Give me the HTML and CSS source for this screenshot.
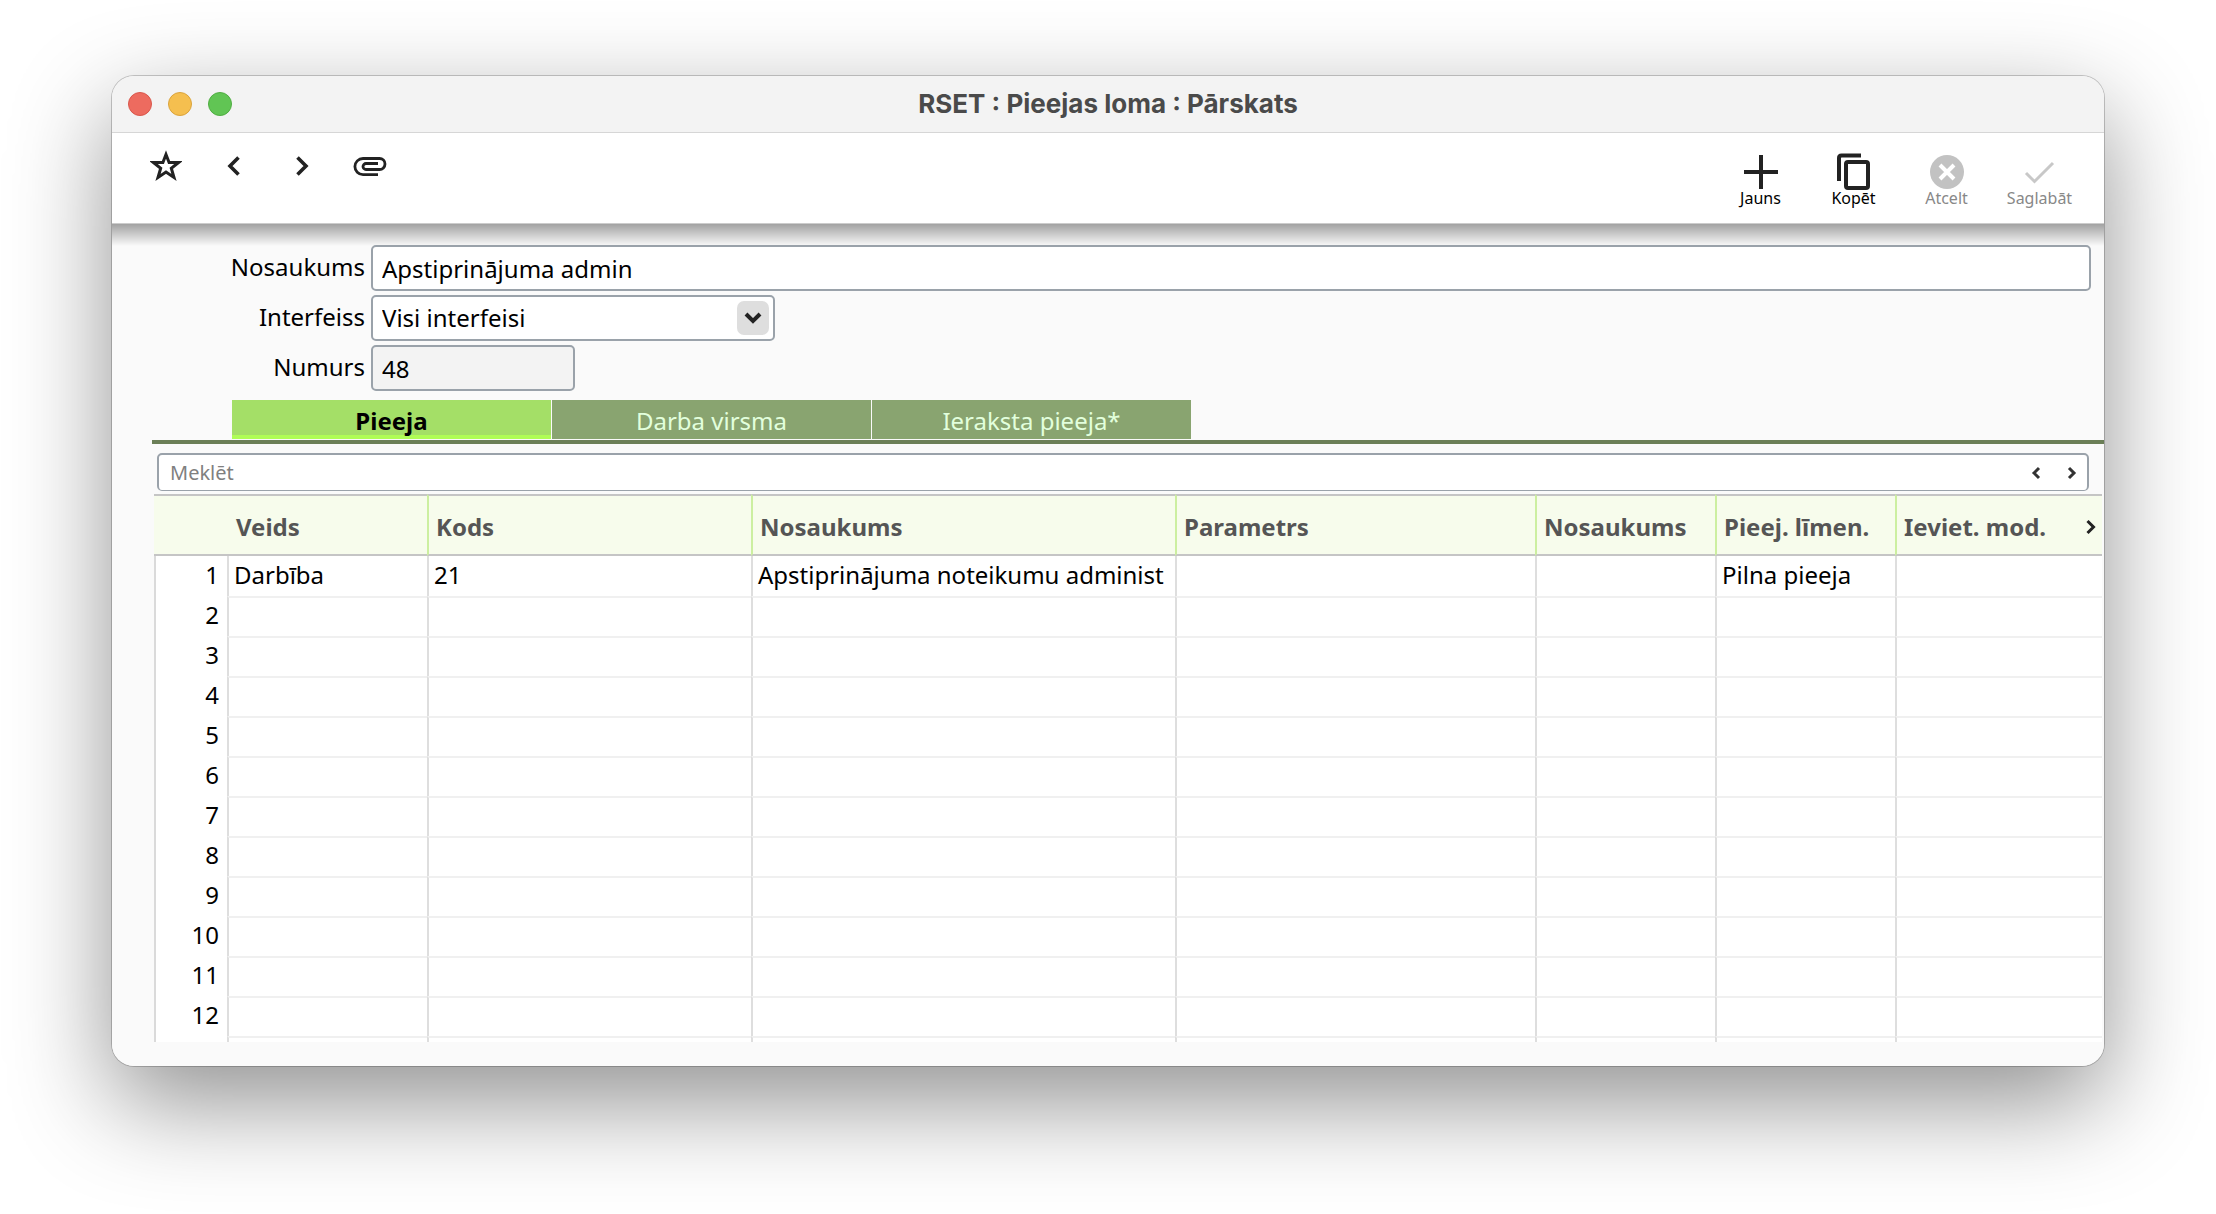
FILE: index.html
```html
<!DOCTYPE html>
<html lang="lv">
  <head>
    <meta charset="utf-8">
    <title>RSET : Pieejas loma : Pārskats</title>
    <link rel="stylesheet" href="styles.css">
  </head>
  <body>

    <div class="window">
      <header class="titlebar">
        <div class="lights">
          <button class="light close" aria-label="Aizvērt"></button>
          <button class="light minimize" aria-label="Minimizēt"></button>
          <button class="light maximize" aria-label="Palielināt"></button>
        </div>
        <h1>RSET : Pieejas loma : Pārskats</h1>
      </header>

      <div class="toolbar">
        <div class="nav">
          <button aria-label="Izlase">
            <svg width="32" height="32" viewBox="0 0 32 32" fill="none" stroke="#222" stroke-width="3"><path d="M16 4.500l3.100 8h9.400l-7.200 5.700 2.700 9.300-8-5.400-8 5.400 2.700-9.300-7.200-5.700h9.400z"/></svg>
          </button>
          <button aria-label="Iepriekšējais">
            <svg width="32" height="32" viewBox="0 0 32 32" fill="none" stroke="#222" stroke-width="3.600"><path d="M20.500 7.500L12 16l8.500 8.500"/></svg>
          </button>
          <button aria-label="Nākamais">
            <svg width="32" height="32" viewBox="0 0 32 32" fill="none" stroke="#222" stroke-width="3.600"><path d="M11.500 7.500L20 16l-8.500 8.500"/></svg>
          </button>
          <button aria-label="Pielikumi">
            <svg width="34" height="32" viewBox="0 0 34 32" fill="none" stroke="#222" stroke-width="2.800"><path d="M25 24.700H10a8 8 0 0 1 0-16.200h16.500a5.500 5.500 0 0 1 0 11H13a3 3 0 0 1 0-6h12"/></svg>
          </button>
        </div>
        <div class="actions">
          <button>
            <svg width="40" height="40" viewBox="0 0 40 40" fill="none" stroke="#222" stroke-width="4"><path d="M20 3v34M3 20h34"/></svg>
            Jauns
          </button>
          <button>
            <svg width="40" height="40" viewBox="0 0 40 40" fill="none" stroke="#222" stroke-width="4"><path d="M5 29V6q0-2.500 2.500-2.500H27"/><rect x="12" y="10" width="22" height="26" rx="2"/></svg>
            Kopēt
          </button>
          <button disabled>
            <svg width="40" height="40" viewBox="0 0 40 40"><circle cx="20" cy="20" r="17" fill="#c2c2c2"/><path d="M13 13l14 14M27 13L13 27" stroke="#fff" stroke-width="4"/></svg>
            Atcelt
          </button>
          <button disabled>
            <svg width="40" height="40" viewBox="0 0 40 40" fill="none" stroke="#c8c8c8" stroke-width="3"><path d="M6 21l8.500 8.500L33 11"/></svg>
            Saglabāt
          </button>
        </div>
      </div>

      <main class="content">
        <form class="fields">
          <label for="name">Nosaukums</label>
          <input id="name" type="text" value="Apstiprinājuma admin">

          <label for="interface">Interfeiss</label>
          <div class="dropdown">
            <select id="interface">
              <option>Visi interfeisi</option>
            </select>
            <span class="arrow">
              <svg width="18" height="14" viewBox="0 0 18 14" fill="none" stroke="#222" stroke-width="4"><path d="M2 3l7 7 7-7"/></svg>
            </span>
          </div>

          <label for="number">Numurs</label>
          <input id="number" class="short" type="text" value="48" readonly>
        </form>

        <nav class="tabs">
          <button class="active">Pieeja</button>
          <button>Darba virsma</button>
          <button>Ieraksta pieeja*</button>
        </nav>

        <div class="search">
          <input type="text" placeholder="Meklēt" aria-label="Meklēt">
          <button aria-label="Atrast iepriekšējo">
            <svg width="12" height="14" viewBox="0 0 12 14" fill="none" stroke="#333" stroke-width="3"><path d="M9 2L4 7l5 5"/></svg>
          </button>
          <button aria-label="Atrast nākamo">
            <svg width="12" height="14" viewBox="0 0 12 14" fill="none" stroke="#333" stroke-width="3"><path d="M3 2l5 5-5 5"/></svg>
          </button>
        </div>

        <table class="grid">
          <colgroup>
            <col class="col-row">
            <col class="col-type">
            <col class="col-code">
            <col class="col-name">
            <col class="col-param">
            <col class="col-small">
            <col class="col-small">
            <col>
          </colgroup>
          <thead>
            <tr>
              <td></td>
              <th>Veids</th>
              <th>Kods</th>
              <th>Nosaukums</th>
              <th>Parametrs</th>
              <th>Nosaukums</th>
              <th>Pieej. līmen.</th>
              <th>
                <div class="last">
                  Ieviet. mod.
                  <button aria-label="Nākamās kolonnas">
                    <svg width="12" height="16" viewBox="0 0 12 16" fill="none" stroke="#222" stroke-width="3"><path d="M2.500 2l6 6-6 6"/></svg>
                  </button>
                </div>
              </th>
            </tr>
          </thead>
          <tbody>
            <tr><th>1</th><td>Darbība</td><td>21</td><td>Apstiprinājuma noteikumu administ</td><td></td><td></td><td>Pilna pieeja</td><td></td></tr>
            <tr><th>2</th><td></td><td></td><td></td><td></td><td></td><td></td><td></td></tr>
            <tr><th>3</th><td></td><td></td><td></td><td></td><td></td><td></td><td></td></tr>
            <tr><th>4</th><td></td><td></td><td></td><td></td><td></td><td></td><td></td></tr>
            <tr><th>5</th><td></td><td></td><td></td><td></td><td></td><td></td><td></td></tr>
            <tr><th>6</th><td></td><td></td><td></td><td></td><td></td><td></td><td></td></tr>
            <tr><th>7</th><td></td><td></td><td></td><td></td><td></td><td></td><td></td></tr>
            <tr><th>8</th><td></td><td></td><td></td><td></td><td></td><td></td><td></td></tr>
            <tr><th>9</th><td></td><td></td><td></td><td></td><td></td><td></td><td></td></tr>
            <tr><th>10</th><td></td><td></td><td></td><td></td><td></td><td></td><td></td></tr>
            <tr><th>11</th><td></td><td></td><td></td><td></td><td></td><td></td><td></td></tr>
            <tr><th>12</th><td></td><td></td><td></td><td></td><td></td><td></td><td></td></tr>
            <tr class="cut"><th></th><td></td><td></td><td></td><td></td><td></td><td></td><td></td></tr>
          </tbody>
        </table>
      </main>
    </div>

  </body>
</html>
```
FILE: styles.css
```css
* {
  box-sizing: border-box;
}

body {
  margin: 0;
  padding: 76px 112px 148px;
  background: #fff;
  color: #000;
  font-family: "Noto Sans", sans-serif;
  font-size: 24px;
  line-height: 32px;
}

button, input, select {
  font: inherit;
  color: inherit;
}

button {
  padding: 0;
  border: 0;
  background: none;
}

svg {
  display: block;
}

.window {
  border-radius: 22px;
  background: #fafafa;
  box-shadow: 0 0 0 1px rgba(0, 0, 0, 0.2), 0 36px 100px rgba(0, 0, 0, 0.44);
  overflow: hidden;
}

/* title bar */

.titlebar {
  display: grid;
  grid-template-columns: 1fr auto 1fr;
  align-items: center;
  height: 57px;
  padding: 0 16px;
  background: #f3f3f3;
  border-bottom: 1px solid #d6d6d6;
}

.titlebar h1 {
  margin: 0;
  color: #4a4a4a;
  font-family: Inter, sans-serif;
  font-size: 26px;
  font-weight: 700;
}

.lights {
  display: flex;
  gap: 16px;
}

.light {
  width: 24px;
  height: 24px;
  border: 1px solid #d9574c;
  border-radius: 50%;
  background: #ed6b5f;
}

.light.minimize {
  border-color: #daa33c;
  background: #f5bf4f;
}

.light.maximize {
  border-color: #50ad42;
  background: #61c554;
}

/* toolbar */

.toolbar {
  display: flex;
  justify-content: space-between;
  height: 91px;
  padding: 0 18px 0 20px;
  background: #fff;
  border-bottom: 1px solid #ccc;
}

.nav, .actions {
  display: flex;
}

.nav button {
  display: flex;
  justify-content: center;
  width: 68px;
  padding-top: 17px;
}

.actions button {
  display: flex;
  flex-direction: column;
  align-items: center;
  width: 93px;
  padding-top: 19px;
  font-size: 16px;
  line-height: 20px;
}

.actions button svg {
  margin-bottom: -4px;
}

.actions button:disabled {
  color: #888;
}

/* form */

.content {
  padding: 21px 0 24px 40px;
  background: linear-gradient(#a2a2a2, #fafafa 22px);
}

.fields {
  display: grid;
  grid-template-columns: 213px 1fr;
  gap: 4px 6px;
  margin-right: 13px;
}

.fields label {
  padding-top: 6px;
  text-align: right;
}

.fields input, .fields select {
  width: 100%;
  height: 46px;
  padding: 0 9px;
  border: 2px solid #9aa2aa;
  border-radius: 5px;
  background: #fff;
}

.fields .short {
  width: 204px;
  background: #f3f3f3;
}

.dropdown {
  position: relative;
  width: 404px;
}

.dropdown select {
  appearance: none;
}

.dropdown .arrow {
  position: absolute;
  top: 6px;
  right: 6px;
  display: flex;
  align-items: center;
  justify-content: center;
  width: 32px;
  height: 34px;
  border-radius: 7px;
  background: #dedede;
  pointer-events: none;
}

/* tabs */

.tabs {
  display: flex;
  gap: 1px;
  margin-top: 9px;
  padding: 0 0 1px 80px;
  border-bottom: 4px solid #6b7f57;
}

.tabs button {
  width: 319px;
  height: 39px;
  padding-top: 5px;
  border-bottom: 4px solid #89a470;
  background: #89a470;
  color: #e2ffdc;
}

.tabs .active {
  border-color: #affd56;
  background: #a4df67;
  color: #000;
  font-weight: 700;
}

/* search */

.search {
  display: flex;
  height: 38px;
  margin: 9px 15px 3px 5px;
  border: 2px solid #9aa2aa;
  border-bottom-width: 1px;
  border-radius: 5px;
  background: #fff;
}

.search input {
  flex: 1;
  min-width: 0;
  padding: 0 11px;
  border: 0;
  background: none;
  font-size: 20px;
}

.search input::placeholder {
  color: #808080;
  opacity: 1;
}

.search button {
  display: flex;
  align-items: center;
  justify-content: center;
  width: 36px;
}

.search button:last-child {
  margin-right: -3px;
}

/* grid */

.grid {
  width: calc(100% - 4px);
  margin: 0 2px;
  table-layout: fixed;
  border-collapse: separate;
  border-spacing: 0;
}

.col-row { width: 73px; }
.col-type { width: 200px; }
.col-code { width: 324px; }
.col-name { width: 424px; }
.col-param { width: 360px; }
.col-small { width: 180px; }

.grid th, .grid td {
  overflow: hidden;
  text-align: left;
  white-space: nowrap;
}

.grid thead th, .grid thead td {
  height: 62px;
  padding: 4px 5px 0 7px;
  background: #f7fcec;
  border: 0 solid #c5c5c5;
  border-width: 2px 0;
  color: #555;
}

.grid thead th {
  border-left: 2px solid #ccefa0;
}

.grid thead td + th {
  padding-left: 9px;
  border-left: 0;
}

.grid .last {
  display: flex;
  align-items: center;
  justify-content: space-between;
}

.grid tbody th {
  height: 40px;
  padding: 0 8px 2px 0;
  background: #fff;
  border-left: 2px solid #dadada;
  font-weight: 400;
  text-align: right;
}

.grid tbody td {
  height: 40px;
  padding: 0 0 2px 5px;
  background: #fff;
  border-left: 2px solid #dedede;
}

.grid tbody tr + tr td {
  border-top: 2px solid #f0f0f0;
}

.grid .cut th, .grid .cut td {
  height: 6px;
}
```
